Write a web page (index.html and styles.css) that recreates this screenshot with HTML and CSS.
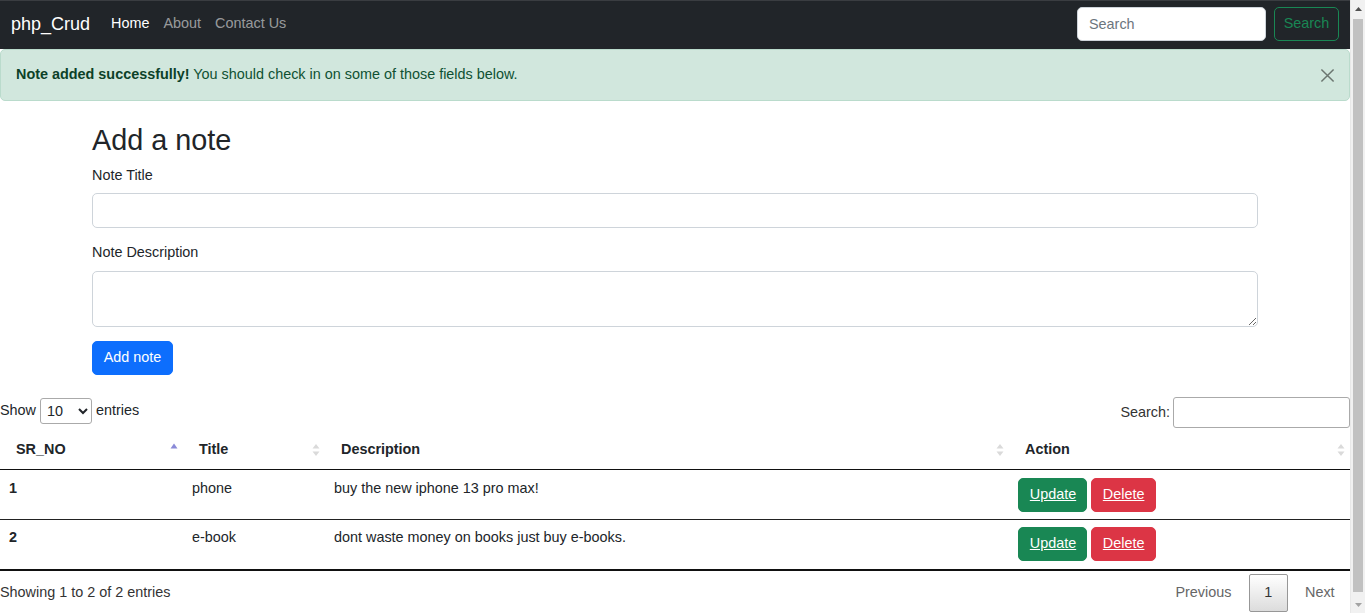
FILE: index.html
```html
<!DOCTYPE html>
<html lang="en">
<head>
<meta charset="utf-8">
<title>php_Crud</title>
<link rel="stylesheet" href="styles.css">
</head>
<body>
<div class="page">
<nav class="navbar">
  <div class="nav-inner">
    <a class="brand" href="#">php_Crud</a>
    <ul class="nav-links">
      <li><a class="nav-link active" href="#">Home</a></li>
      <li><a class="nav-link" href="#">About</a></li>
      <li><a class="nav-link" href="#">Contact Us</a></li>
    </ul>
    <form class="nav-search">
      <input class="nav-search-input" type="search" placeholder="Search">
      <button class="btn-outline-success" type="button">Search</button>
    </form>
  </div>
</nav>

<div class="alert">
  <strong>Note added successfully!</strong> You should check in on some of those fields below.
  <button class="btn-close" type="button" aria-label="Close">
    <svg width="15" height="15" viewBox="0 0 16 16"><path d="M1.5 1.5L14.5 14.5M14.5 1.5L1.5 14.5" stroke="#6b7670" stroke-width="1.6" fill="none"/></svg>
  </button>
</div>

<div class="container">
  <h2 class="title">Add a note</h2>
  <form>
    <div class="field">
      <label class="form-label" for="title">Note Title</label>
      <input class="form-control" type="text" id="title">
    </div>
    <div class="field">
      <label class="form-label" for="desc">Note Description</label>
      <textarea class="form-control textarea" id="desc" rows="2"></textarea>
    </div>
    <button class="btn-primary" type="button">Add note</button>
  </form>
</div>

<div class="dt-wrapper">
  <div class="dt-top">
    <div class="dt-length">Show
      <select class="dt-select"><option>10</option><option>25</option><option>50</option><option>100</option></select>
      entries</div>
    <div class="dt-filter"><label>Search:<input class="dt-filter-input" type="search"></label></div>
  </div>
  <table class="dt-table">
    <thead>
      <tr>
        <th class="c1"><div class="th-in"><span>SR_NO</span><svg class="sort" width="8" height="16" viewBox="0 0 8 16"><path d="M0.5 6.5L4 1.5L7.5 6.5Z" fill="#8a8ad8"/></svg></div></th>
        <th class="c2"><div class="th-in"><span>Title</span><svg class="sort" width="8" height="16" viewBox="0 0 8 16"><path d="M0.5 6.5L4 2L7.5 6.5Z M0.5 9.5L4 14L7.5 9.5Z" fill="#dadada"/></svg></div></th>
        <th class="c3"><div class="th-in"><span>Description</span><svg class="sort" width="8" height="16" viewBox="0 0 8 16"><path d="M0.5 6.5L4 2L7.5 6.5Z M0.5 9.5L4 14L7.5 9.5Z" fill="#dadada"/></svg></div></th>
        <th class="c4"><div class="th-in"><span>Action</span><svg class="sort" width="8" height="16" viewBox="0 0 8 16"><path d="M0.5 6.5L4 2L7.5 6.5Z M0.5 9.5L4 14L7.5 9.5Z" fill="#dadada"/></svg></div></th>
      </tr>
    </thead>
    <tbody>
      <tr>
        <th class="row-num">1</th>
        <td>phone</td>
        <td>buy the new iphone 13 pro max!</td>
        <td><button class="btn btn-success" type="button"><a href="#">Update</a></button> <button class="btn btn-danger" type="button"><a href="#">Delete</a></button></td>
      </tr>
      <tr>
        <th class="row-num">2</th>
        <td>e-book</td>
        <td>dont waste money on books just buy e-books.</td>
        <td><button class="btn btn-success" type="button"><a href="#">Update</a></button> <button class="btn btn-danger" type="button"><a href="#">Delete</a></button></td>
      </tr>
    </tbody>
  </table>
  <div class="dt-bottom">
    <div class="dt-info">Showing 1 to 2 of 2 entries</div>
    <div class="dt-paginate">
      <a class="pg-btn disabled">Previous</a>
      <a class="pg-btn current">1</a>
      <a class="pg-btn disabled">Next</a>
    </div>
  </div>
</div>
</div>

<div class="scrollbar" aria-hidden="true">
  <div class="sb-arrow"><svg width="7" height="4" viewBox="0 0 7 4"><path d="M0 4L3.5 0L7 4Z" fill="#505050"/></svg></div>
  <div class="sb-track"><div class="sb-thumb"></div></div>
  <div class="sb-arrow"><svg width="7" height="4" viewBox="0 0 7 4"><path d="M0 0L3.5 4L7 0Z" fill="#a3a3a3"/></svg></div>
</div>
</body>
</html>
```

FILE: styles.css
```css
* { box-sizing: border-box; }

html, body { margin: 0; padding: 0; }

body {
  font-family: "Liberation Sans", Arial, sans-serif;
  font-size: 14.4px;
  line-height: 1.5;
  color: #212529;
  background: #fff;
  display: flex;
  align-items: flex-start;
  overflow: hidden;
}

.page {
  width: 1350px;
  flex: none;
}

a { color: inherit; text-decoration: none; }

/* Fake window scrollbar */
.scrollbar {
  width: 15px;
  height: 613px;
  flex: none;
  background: #f1f1f1;
  border-left: 1px solid #e8e8e8;
  display: flex;
  flex-direction: column;
}
.sb-arrow {
  height: 17px;
  display: flex;
  align-items: center;
  justify-content: center;
  flex: none;
}
.sb-track {
  flex: 1;
  padding: 2px 2px 4px 2px;
  display: flex;
}
.sb-thumb {
  flex: 1;
  background: #c1c1c1;
}

/* Navbar */
.navbar {
  background: #212529;
  padding: 6px 0 8px;
  border-top: 1px solid #3a3d41;
}
.nav-inner {
  display: flex;
  align-items: center;
  padding: 0 11px;
  height: 34px;
}
.brand {
  color: #fff;
  font-size: 18px;
  margin-right: 14px;
  line-height: 27px;
}
.nav-links {
  display: flex;
  list-style: none;
  margin: 0;
  padding: 0;
  flex: 1;
}
.nav-link {
  display: block;
  padding: 7px 7px;
  color: rgba(255,255,255,.55);
}
.nav-link.active { color: #fff; }
.nav-search { display: flex; align-items: center; }
.nav-search-input {
  width: 189px;
  height: 34px;
  border: 1px solid #ced4da;
  border-radius: 5px;
  padding: 5px 11px;
  font: inherit;
  color: #212529;
  margin-right: 8px;
  background: #fff;
}
.nav-search-input::placeholder { color: #6c757d; }
.btn-outline-success {
  height: 34px;
  width: 65px;
  padding: 0;
  font: inherit;
  color: #198754;
  background: transparent;
  border: 1px solid #198754;
  border-radius: 5px;
}

/* Alert */
.alert {
  position: relative;
  background: #d1e7dd;
  border: 1px solid #badbcc;
  color: #0f5132;
  border-radius: 5px;
  padding: 14.4px 48px 14.4px 15px;
  line-height: 21.6px;
  width: 1350px;
  margin-bottom: 14px;
}
.alert strong { color: #0c4128; }
.btn-close {
  position: absolute;
  top: 0;
  right: 0;
  width: 44px;
  height: 50px;
  border: 0;
  background: transparent;
  padding: 0;
  display: flex;
  align-items: center;
  justify-content: center;
}

/* Form */
.container {
  width: 1166px;
  margin: 21.6px auto;
}
.title {
  font-size: 28.8px;
  font-weight: 500;
  line-height: 1.2;
  margin: 0 0 7.2px;
}
.field { margin-bottom: 14.4px; }
.form-label {
  display: block;
  margin-bottom: 7.2px;
  line-height: 21.6px;
}
.form-control {
  display: block;
  width: 100%;
  height: 34.2px;
  border: 1px solid #ced4da;
  border-radius: 5px;
  padding: 5.4px 10.8px;
  font: inherit;
  background: #fff;
}
.textarea {
  height: 55.8px;
  resize: vertical;
}
.btn-primary {
  height: 34.2px;
  width: 81px;
  padding: 0;
  font: inherit;
  color: #fff;
  background: #0d6efd;
  border: 1px solid #0d6efd;
  border-radius: 5px;
}

/* DataTable */
.dt-wrapper { width: 1350px; }
.dt-top {
  display: flex;
  justify-content: space-between;
  align-items: flex-start;
  height: 33px;
}
.dt-length {
  display: flex;
  align-items: center;
  gap: 4px;
  height: 28px;
}
.dt-select {
  width: 52px;
  height: 26px;
  font: inherit;
  border: 1px solid #aaa;
  border-radius: 3px;
  padding: 0 2px;
  background: #fff;
  color: #212529;
}
.dt-filter label {
  display: flex;
  align-items: center;
  color: #333;
}
.dt-filter-input {
  margin-left: 3px;
  width: 177px;
  height: 31px;
  border: 1px solid #aaa;
  border-radius: 3px;
  padding: 4.5px;
  font: inherit;
  background: #fff;
}

.dt-table {
  width: 1350px;
  table-layout: fixed;
  border-collapse: separate;
  border-spacing: 0;
}
.dt-table thead th {
  text-align: left;
  font-weight: bold;
  padding: 9px 5px 9px 16px;
  line-height: 21.6px;
  border-bottom: 1px solid #111;
}
.th-in {
  display: flex;
  justify-content: space-between;
  align-items: center;
}
.sort { display: block; }
.c1 { width: 183px; }
.c2 { width: 142px; }
.c3 { width: 684px; }
.c4 { width: 341px; }

.dt-table tbody th,
.dt-table tbody td {
  padding: 7.2px 9px;
  vertical-align: top;
  text-align: left;
  line-height: 21.6px;
  border-bottom: 1px solid #222;
}
.dt-table tbody tr:last-child th,
.dt-table tbody tr:last-child td {
  border-bottom: 2px solid #111;
}
.row-num { font-weight: bold; }

.btn {
  height: 34.2px;
  padding: 0 10.8px;
  font: inherit;
  border-radius: 5px;
  color: #fff;
  vertical-align: top;
}
.btn a { text-decoration: underline; color: #fff; }
.btn-success { background: #198754; border: 1px solid #198754; width: 69px; }
.btn-danger { background: #dc3545; border: 1px solid #dc3545; width: 65px; }

.dt-bottom {
  display: flex;
  justify-content: space-between;
  align-items: flex-start;
}
.dt-info {
  padding-top: 11.5px;
  line-height: 21.6px;
  color: #333;
}
.dt-paginate {
  padding-top: 3.6px;
  display: flex;
}
.pg-btn {
  display: block;
  padding: 7.2px 14.4px;
  line-height: 21.6px;
  border: 1px solid transparent;
  border-radius: 2px;
  margin-left: 2px;
  color: #666;
}
.pg-btn.current {
  color: #333;
  border: 1px solid #979797;
  background: linear-gradient(to bottom, #fff 0%, #dcdcdc 100%);
}
```
